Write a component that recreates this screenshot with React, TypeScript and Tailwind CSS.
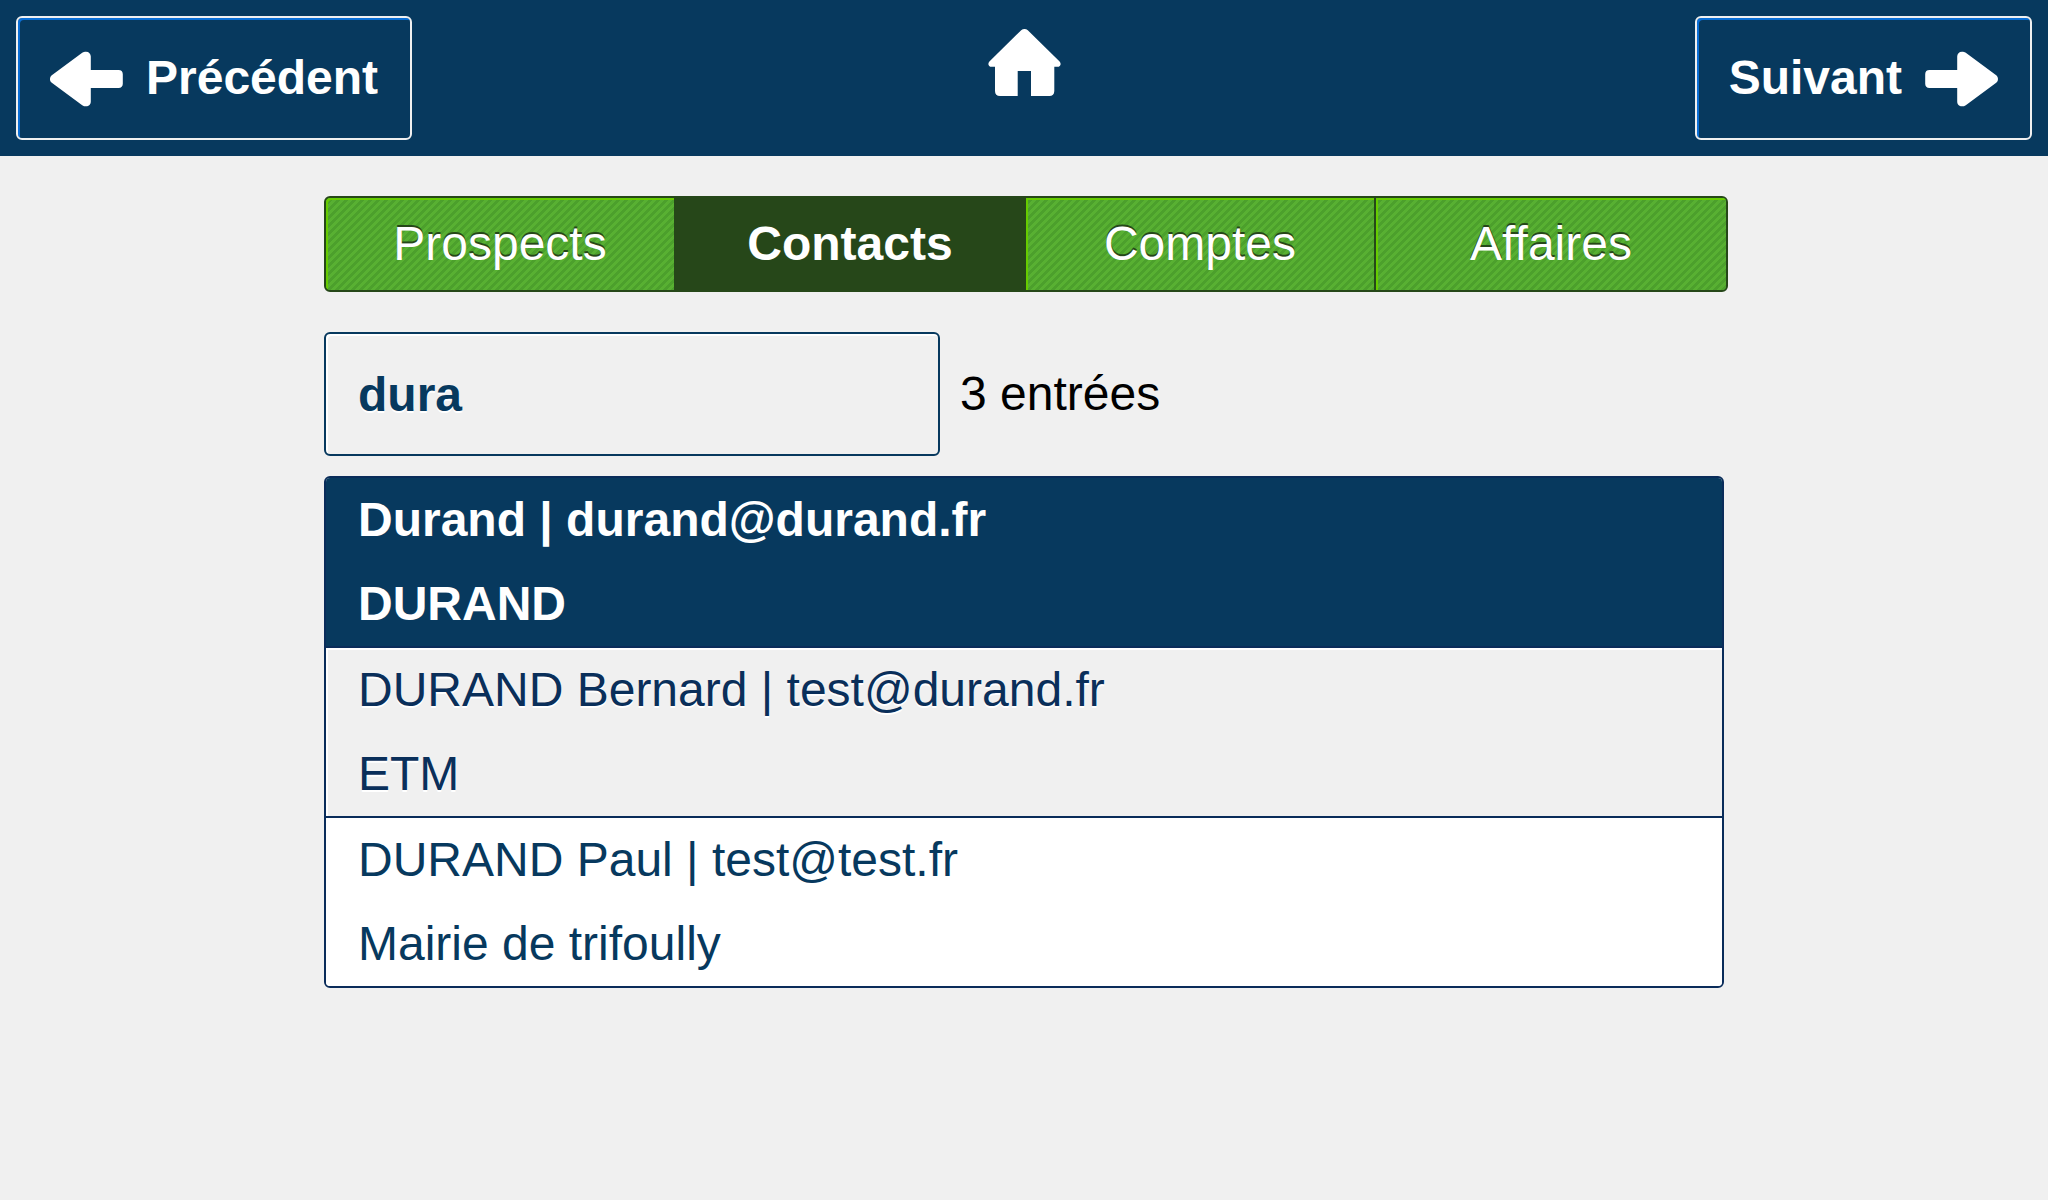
import React, { useState } from 'react';
import clsx from 'clsx';

const tabs = [
  { id: 'prospects', name: 'Prospects' },
  { id: 'contacts', name: 'Contacts' },
  { id: 'comptes', name: 'Comptes' },
  { id: 'affaires', name: 'Affaires' },
];

const contacts = [
  { id: 1, name: 'Durand', email: 'durand@durand.fr', company: 'DURAND' },
  { id: 2, name: 'DURAND Bernard', email: 'test@durand.fr', company: 'ETM' },
  { id: 3, name: 'DURAND Paul', email: 'test@test.fr', company: 'Mairie de trifoully' },
];

const rowStyles = [
  'bg-[#07395e] text-white font-bold',
  'bg-[#f0f0f0] text-[#0a2f5a] [text-shadow:0_2px_0_#fff] shadow-[inset_2px_2px_0_#fff]',
  'bg-white text-[#07395e]',
];

function ArrowIcon({ className }: { className?: string }) {
  return (
    <svg viewBox="0 0 73 56" className={clsx('h-14 w-[73px] overflow-visible', className)} fill="currentColor" aria-hidden="true">
      <path d="M1.8 25.2 32.2 2.8C33.5 1.9 34.5 1.7 36 1.7 39 1.7 40.8 3.8 40.8 6.5V20H68.5C71.3 20 72.8 21.5 72.8 24.2V33.8C72.8 36.5 71.3 38 68.5 38H40.8V51.5C40.8 54.2 39 56.3 36 56.3 34.5 56.3 33.5 56.1 32.2 55.2L1.8 32.8C-.6 31-.6 27 1.8 25.2Z" />
    </svg>
  );
}

function HomeIcon() {
  return (
    <svg viewBox="0 0 73 67" className="h-[67px] w-[73px]" fill="currentColor" aria-hidden="true">
      <path d="M33.2 1.2C35 -.4 38 -.4 39.8 1.2L71.6 32.4C73.6 34.6 72.6 37.8 69.3 37.8H66.3V62C66.3 65.2 64.5 67 61.3 67H43V42H29.7V67H12C8.8 67 7 65.2 7 62V37.8H3.7C.4 37.8-.6 34.6 1.4 32.4Z" />
    </svg>
  );
}

const navButton =
  'flex h-[124px] items-center gap-[23px] rounded-md border-2 border-[#f0f0f0] px-8 font-bold shadow-[inset_2px_2px_0_#0b6fd6]';

function Header() {
  return (
    <header className="grid grid-cols-[1fr_auto_1fr] bg-[#07395e] p-4 text-white">
      <button type="button" className={clsx(navButton, 'justify-self-start')}>
        <ArrowIcon />
        Précédent
      </button>
      <a href="#accueil" aria-label="Accueil" className="mt-[13px] self-start">
        <HomeIcon />
      </a>
      <button type="button" className={clsx(navButton, 'justify-self-end')}>
        Suivant
        <ArrowIcon className="-scale-x-100" />
      </button>
    </header>
  );
}

function App() {
  const [activeTab, setActiveTab] = useState('contacts');
  const [search, setSearch] = useState('dura');

  return (
    <div className="min-h-screen bg-[#f0f0f0] font-['Liberation_Sans',Arial,sans-serif] text-[48px] leading-[84px] text-black">
      <Header />

      <main className="mx-auto w-full max-w-[1400px] pt-10">
        <nav className="box-content grid w-full grid-cols-4 overflow-hidden rounded-md border-2 border-[#264719] bg-[#264719]">
          {tabs.map((tab, i) => (
            <button
              key={tab.id}
              type="button"
              onClick={() => setActiveTab(tab.id)}
              className={clsx(
                'h-[92px] text-white',
                i < tabs.length - 1 && 'border-r-2 border-[#264719]',
                i === 0 && 'rounded-l-sm',
                activeTab === tab.id
                  ? 'bg-[#264719] font-bold'
                  : 'bg-[#4ca22c] bg-[linear-gradient(135deg,#58b032_25%,#4ca02c_25%,#4ca02c_50%,#58b032_50%,#58b032_75%,#4ca02c_75%)] bg-[length:8px_8px] shadow-[inset_2px_2px_0_#66cc00] [text-shadow:0_-2px_0_#264719]'
              )}
            >
              {tab.name}
            </button>
          ))}
        </nav>

        <div className="mt-10 flex items-center gap-5">
          <input
            type="text"
            aria-label="Recherche"
            value={search}
            onChange={(e) => setSearch(e.target.value)}
            className="h-[124px] w-[44%] rounded-md border-2 border-[#07395e] bg-[#f0f0f0] px-8 font-bold text-[#07395e] shadow-[inset_2px_2px_0_#fff] outline-none [text-shadow:0_2px_0_#fff]"
          />
          <span>3 entrées</span>
        </div>

        <ul className="mt-5 divide-y-2 divide-[#0a2c5a] overflow-hidden rounded-md border-2 border-[#0a2c5a]">
          {contacts.map((contact, i) => (
            <li key={contact.id} className={clsx('px-8', rowStyles[i])}>
              <p>
                {contact.name} | {contact.email}
              </p>
              <p>{contact.company}</p>
            </li>
          ))}
        </ul>
      </main>
    </div>
  );
}

export default App;
